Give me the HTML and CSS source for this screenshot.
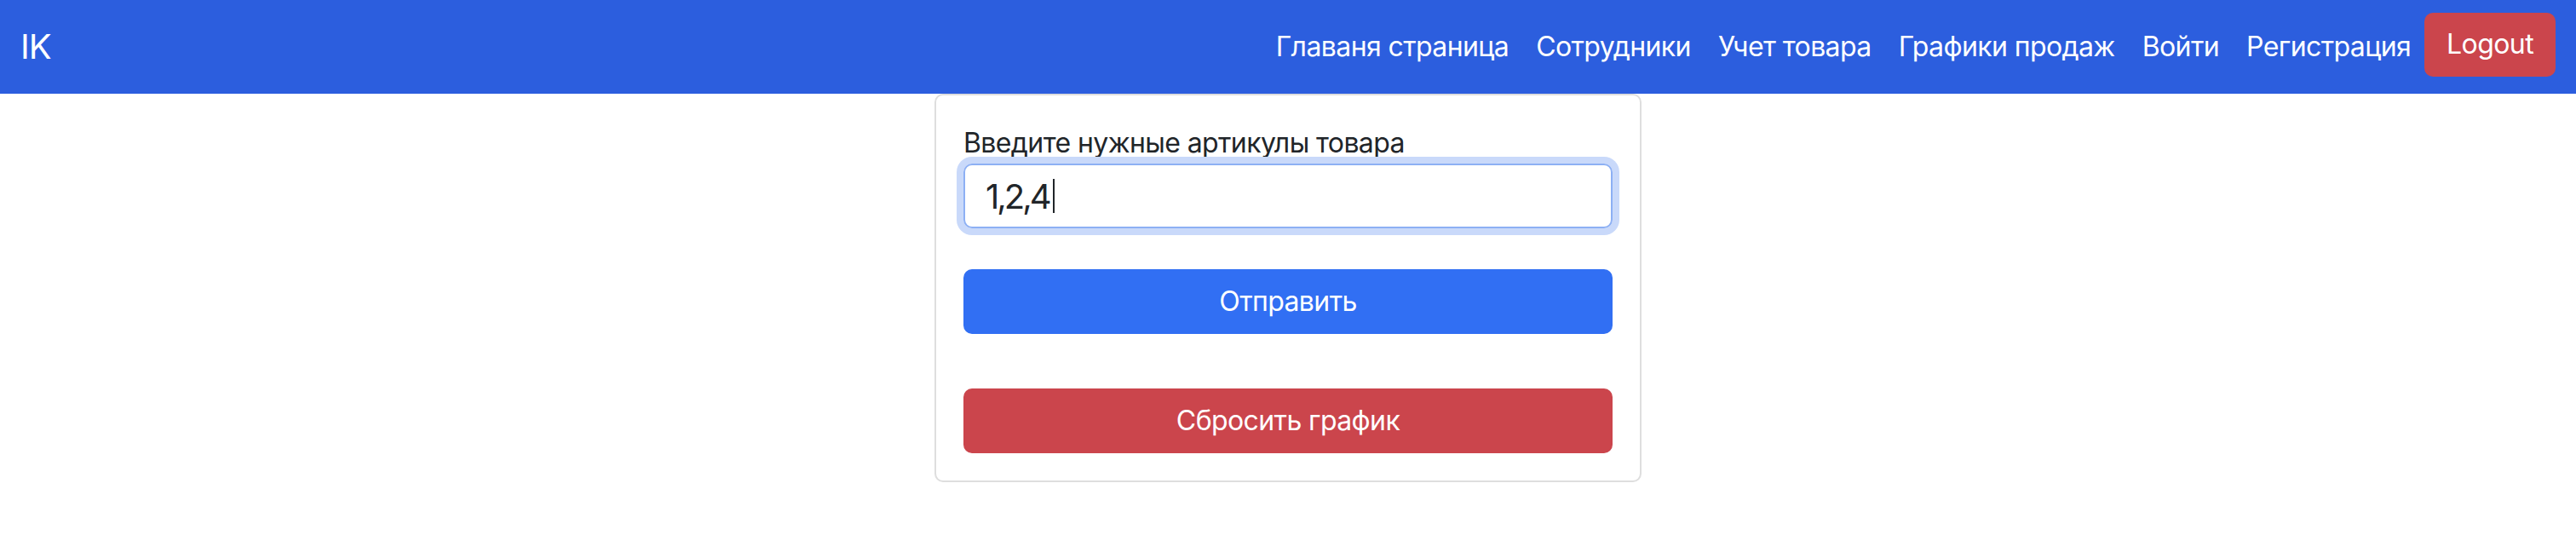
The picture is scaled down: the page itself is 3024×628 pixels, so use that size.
FILE: index.html
```html
<!DOCTYPE html>
<html lang="ru">
<head>
<meta charset="utf-8">
<title>Графики продаж</title>
<link rel="stylesheet" href="styles.css">
</head>
<body>
<nav class="navbar">
  <a class="brand" href="#">IK</a>
  <ul class="nav">
    <li><a class="nav-link" href="#">Главаня страница</a></li>
    <li><a class="nav-link" href="#">Сотрудники</a></li>
    <li><a class="nav-link" href="#">Учет товара</a></li>
    <li><a class="nav-link" href="#">Графики продаж</a></li>
    <li><a class="nav-link" href="#">Войти</a></li>
    <li><a class="nav-link" href="#">Регистрация</a></li>
    <li><button class="btn btn-danger btn-logout" type="button">Logout</button></li>
  </ul>
</nav>
<main class="page">
  <form class="card">
    <label class="label" for="articles">Введите нужные артикулы товара</label>
    <div class="field" id="articles"><span class="value">1,2,4</span><span class="caret"></span></div>
    <button class="btn btn-primary btn-block btn-send" type="button">Отправить</button>
    <button class="btn btn-danger btn-block" type="button">Сбросить график</button>
  </form>
</main>
</body>
</html>
```
FILE: styles.css
```css
* { box-sizing: border-box; }

body {
  margin: 0;
  font-family: Inter, "Noto Sans", "Liberation Sans", sans-serif;
  color: #212529;
  background: #ffffff;
}

.navbar {
  height: 110px;
  background: #2c5ede;
  display: flex;
  align-items: center;
  justify-content: space-between;
  padding: 0 24px;
}

.brand {
  color: #ffffff;
  text-decoration: none;
  font-size: 40px;
  line-height: 60px;
  letter-spacing: -1px;
}

.nav {
  list-style: none;
  margin: 0;
  padding: 0;
  display: flex;
  align-items: center;
}

.nav-link {
  display: block;
  color: #ffffff;
  text-decoration: none;
  font-size: 32px;
  line-height: 48px;
  padding: 16px 16px;
  letter-spacing: -0.6px;
}

.btn {
  border: 0;
  font-family: inherit;
  font-size: 32px;
  line-height: 48px;
  color: #ffffff;
  border-radius: 10px;
  cursor: pointer;
  letter-spacing: -0.6px;
}

.btn-danger { background: #cb454c; }
.btn-primary { background: #316ff3; }

.btn-logout {
  height: 75px;
  padding: 0 26px;
  margin-bottom: 6px;
}

.page {
  display: flex;
  justify-content: center;
}

.card {
  width: 830px;
  border: 2px solid #dedede;
  border-radius: 10px;
  padding: 32px;
  display: flex;
  flex-direction: column;
}

.label {
  font-size: 32px;
  line-height: 48px;
  letter-spacing: -0.6px;
}

.field {
  height: 76px;
  border: 2px solid #8db0f4;
  border-radius: 10px;
  box-shadow: 0 0 0 8px #c9d9fa;
  display: flex;
  align-items: center;
  padding: 0 24px;
  font-size: 40px;
  letter-spacing: -3px;
  color: #212529;
}

.caret {
  display: inline-block;
  width: 2px;
  height: 40px;
  background: #212529;
  margin-left: 4px;
}

.btn-block {
  width: 100%;
  height: 76px;
  display: flex;
  align-items: center;
  justify-content: center;
}

.btn-send {
  margin-top: 48px;
  margin-bottom: 64px;
}
```
